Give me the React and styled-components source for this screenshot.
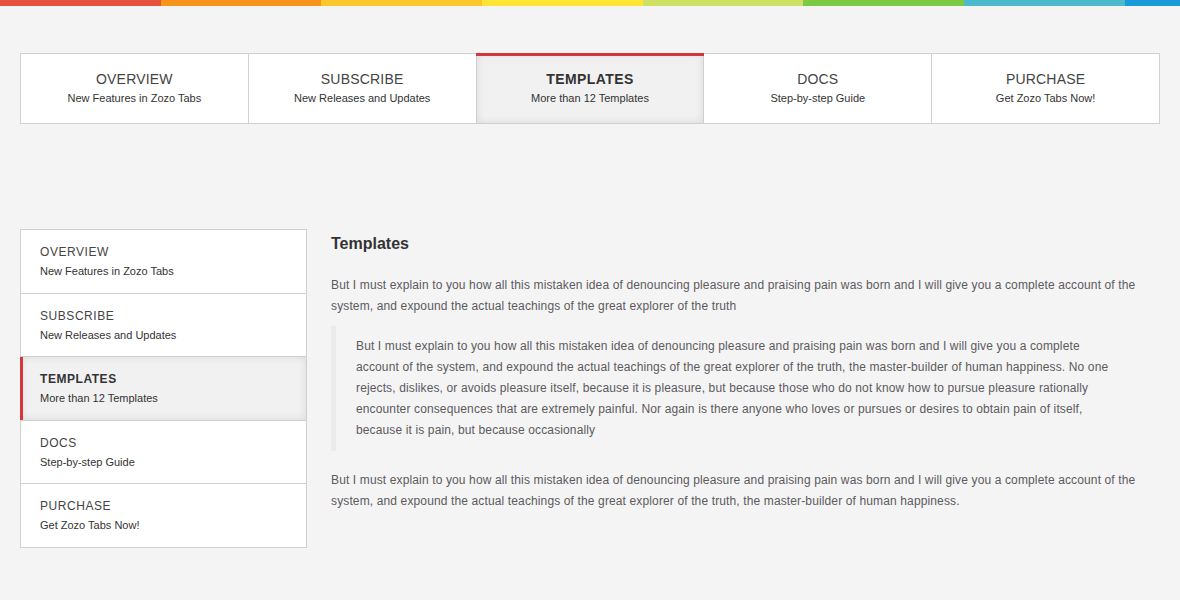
import React, { useState } from 'react';
import styled, { createGlobalStyle } from 'styled-components';

const GlobalStyle = createGlobalStyle`
  html, body {
    margin: 0;
    padding: 0;
    background: #f4f4f4;
  }
  body {
    font-family: "Liberation Sans", Arial, sans-serif;
    color: #555;
  }
`;

const colors = ['#e8523c', '#f7941e', '#fcc72c', '#fde435', '#cfe164', '#7dc943', '#4bbbcc', '#1a9ad9'];

const ColorBar = styled.div`
  display: flex;
  height: 6px;
`;

const ColorSeg = styled.div`
  flex: ${p => (p.$last ? '1 1 auto' : '0 0 160.7px')};
  background: ${p => p.$color};
`;

const Page = styled.div`
  padding: 47px 20px 40px;
`;

const TopTabs = styled.ul`
  display: flex;
  margin: 0;
  padding: 0;
  list-style: none;
  border: 1px solid #d0d0d0;
  background: #fff;
`;

const TopTab = styled.li`
  flex: 1;
  position: relative;
  text-align: center;
  padding: 15px 0 17px;
  border-right: 1px solid #d0d0d0;
  cursor: pointer;
  background: ${p => (p.$active ? '#f1f1f1' : '#fff')};
  box-shadow: ${p => (p.$active ? 'inset 0 0 8px rgba(0,0,0,0.1)' : 'none')};

  &:last-child {
    border-right: none;
  }

  &::before {
    content: '';
    display: ${p => (p.$active ? 'block' : 'none')};
    position: absolute;
    top: -1px;
    left: -1px;
    right: -1px;
    height: 3px;
    background: #d2373b;
  }
`;

const TopTitle = styled.div`
  font-size: 14px;
  line-height: 20px;
  text-transform: uppercase;
  letter-spacing: ${p => (p.$active ? '0.4px' : '0.2px')};
  font-weight: ${p => (p.$active ? 'bold' : 'normal')};
  color: ${p => (p.$active ? '#333' : '#444')};
`;

const SideTitle = styled.div`
  font-size: 12px;
  line-height: 20px;
  text-transform: uppercase;
  letter-spacing: 0.55px;
  font-weight: ${p => (p.$active ? 'bold' : 'normal')};
  color: ${p => (p.$active ? '#333' : '#444')};
`;

const TabSub = styled.div`
  margin-top: 1px;
  font-size: 11px;
  line-height: 16px;
  color: #333;
`;

const Lower = styled.div`
  display: flex;
  gap: 24px;
  margin-top: 105px;
  align-items: flex-start;
`;

const SideTabs = styled.ul`
  flex: 0 0 287px;
  margin: 0;
  padding: 0;
  list-style: none;
  border: 1px solid #d0d0d0;
  border-bottom: none;
  background: #fff;
  box-sizing: border-box;
`;

const SideTab = styled.li`
  position: relative;
  padding: 12px 19px 13.6px;
  border-bottom: 1px solid #d0d0d0;
  cursor: pointer;
  background: ${p => (p.$active ? '#f1f1f1' : '#fff')};
  box-shadow: ${p => (p.$active ? 'inset 0 0 8px rgba(0,0,0,0.1)' : 'none')};

  &::before {
    content: '';
    display: ${p => (p.$active ? 'block' : 'none')};
    position: absolute;
    top: 0;
    bottom: 0;
    left: -1px;
    width: 3px;
    background: #d2373b;
  }
`;

const Content = styled.div`
  flex: 1;
  padding-top: 5px;
  font-size: 12px;
  line-height: 21px;
  letter-spacing: 0.13px;
  color: #5c5a5e;
`;

const Heading = styled.h4`
  margin: 0 0 21px;
  font-size: 16px;
  line-height: 20px;
  letter-spacing: 0;
  font-weight: bold;
  color: #333;
`;

const Para = styled.p`
  margin: 0 0 9px;
`;

const Quote = styled.blockquote`
  margin: 0 45px 19px 0;
  padding: 10px 0 10px 20px;
  border-left: 5px solid #ebebeb;
`;

const tabs = [
  { title: 'Overview', sub: 'New Features in Zozo Tabs' },
  { title: 'Subscribe', sub: 'New Releases and Updates' },
  { title: 'Templates', sub: 'More than 12 Templates' },
  { title: 'Docs', sub: 'Step-by-step Guide' },
  { title: 'Purchase', sub: 'Get Zozo Tabs Now!' },
];

const intro = 'But I must explain to you how all this mistaken idea of denouncing pleasure and praising pain was born and I will give you a complete account of the system, and expound the actual teachings of the great explorer of the truth';

const quote = 'But I must explain to you how all this mistaken idea of denouncing pleasure and praising pain was born and I will give you a complete account of the system, and expound the actual teachings of the great explorer of the truth, the master-builder of human happiness. No one rejects, dislikes, or avoids pleasure itself, because it is pleasure, but because those who do not know how to pursue pleasure rationally encounter consequences that are extremely painful. Nor again is there anyone who loves or pursues or desires to obtain pain of itself, because it is pain, but because occasionally';

const outro = 'But I must explain to you how all this mistaken idea of denouncing pleasure and praising pain was born and I will give you a complete account of the system, and expound the actual teachings of the great explorer of the truth, the master-builder of human happiness.';

export default function App() {
  const [top, setTop] = useState(2);
  const [side, setSide] = useState(2);

  return (
    <>
      <GlobalStyle />
      <ColorBar>
        {colors.map((c, i) => (
          <ColorSeg key={c} $color={c} $last={i === colors.length - 1} />
        ))}
      </ColorBar>
      <Page>
        <TopTabs>
          {tabs.map((t, i) => (
            <TopTab key={t.title} $active={i === top} onClick={() => setTop(i)}>
              <TopTitle $active={i === top}>{t.title}</TopTitle>
              <TabSub>{t.sub}</TabSub>
            </TopTab>
          ))}
        </TopTabs>

        <Lower>
          <SideTabs>
            {tabs.map((t, i) => (
              <SideTab key={t.title} $active={i === side} onClick={() => setSide(i)}>
                <SideTitle $active={i === side}>{t.title}</SideTitle>
                <TabSub>{t.sub}</TabSub>
              </SideTab>
            ))}
          </SideTabs>
          <Content>
            <Heading>{tabs[side].title}</Heading>
            <Para>{intro}</Para>
            <Quote>{quote}</Quote>
            <Para>{outro}</Para>
          </Content>
        </Lower>
      </Page>
    </>
  );
}
